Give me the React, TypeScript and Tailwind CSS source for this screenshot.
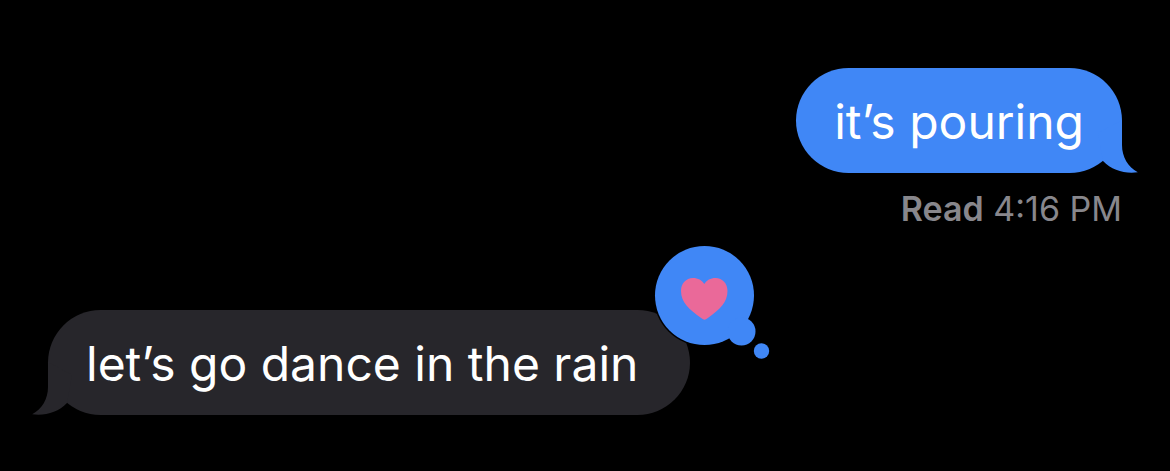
import type { ReactNode } from "react";

function Tail({ side }: { side: "left" | "right" }) {
  return (
    <svg
      viewBox="0 0 60 60"
      aria-hidden="true"
      className={
        side === "right"
          ? "absolute -right-4 bottom-0 size-15 fill-[#4087f6]"
          : "absolute -left-4 bottom-0 size-15 -scale-x-100 fill-[#27262b]"
      }
    >
      <path d="M44 7V32C44 44 50 54 59.800 59.300C47 61 34 57.500 25 48L20 20Z" />
    </svg>
  );
}

function Bubble({ side, children }: { side: "left" | "right"; children: ReactNode }) {
  return (
    <div
      className={
        side === "right"
          ? "relative rounded-[53px] bg-[#4087f6] px-[38px] pt-[21px] pb-[19px]"
          : "relative rounded-[53px] bg-[#27262b] pt-[21px] pr-[52px] pb-[19px] pl-[38px]"
      }
    >
      <Tail side={side} />
      <p className="relative whitespace-nowrap text-5xl leading-[65px] text-white">{children}</p>
      {side === "left" && <HeartReaction />}
    </div>
  );
}

function HeartReaction() {
  return (
    <svg
      viewBox="0 0 120 120"
      role="img"
      aria-label="Loved"
      className="absolute -top-17 -right-21 size-30"
    >
      <g fill="#000">
        <circle cx="50.500" cy="53.500" r="51" />
        <circle cx="87.500" cy="89.500" r="15.500" />
      </g>
      <g fill="#4087f6">
        <circle cx="50.500" cy="53.500" r="49.500" />
        <circle cx="87.500" cy="89.500" r="14" />
        <circle cx="107.500" cy="109" r="7.700" />
      </g>
      <path
        fill="#ea6999"
        d="M50.500 77.700C49.500 77.700 48.500 77 47.500 76.300C35 67.500 27 60 27 49C27 41.500 32 36 39 36C44 36 48 38.200 50.300 42C52.600 38.200 56.500 36 61.500 36C68.500 36 73.500 41.500 73.500 49C73.500 60 66 67.500 53.500 76.300C52.500 77 51.500 77.700 50.500 77.700Z"
      />
    </svg>
  );
}

export default function App() {
  return (
    <main className="flex min-h-screen flex-col bg-black px-12 pt-17 pb-14 font-['Inter',sans-serif]">
      <section className="flex flex-col items-end">
        <Bubble side="right">it’s pouring</Bubble>
        <p className="mt-4 text-[34px] leading-[39px] text-[#88878c]">
          <span className="font-semibold">Read</span> 4:16 PM
        </p>
      </section>
      <section className="mt-[82px] flex items-start">
        <Bubble side="left">let’s go dance in the rain</Bubble>
      </section>
    </main>
  );
}
